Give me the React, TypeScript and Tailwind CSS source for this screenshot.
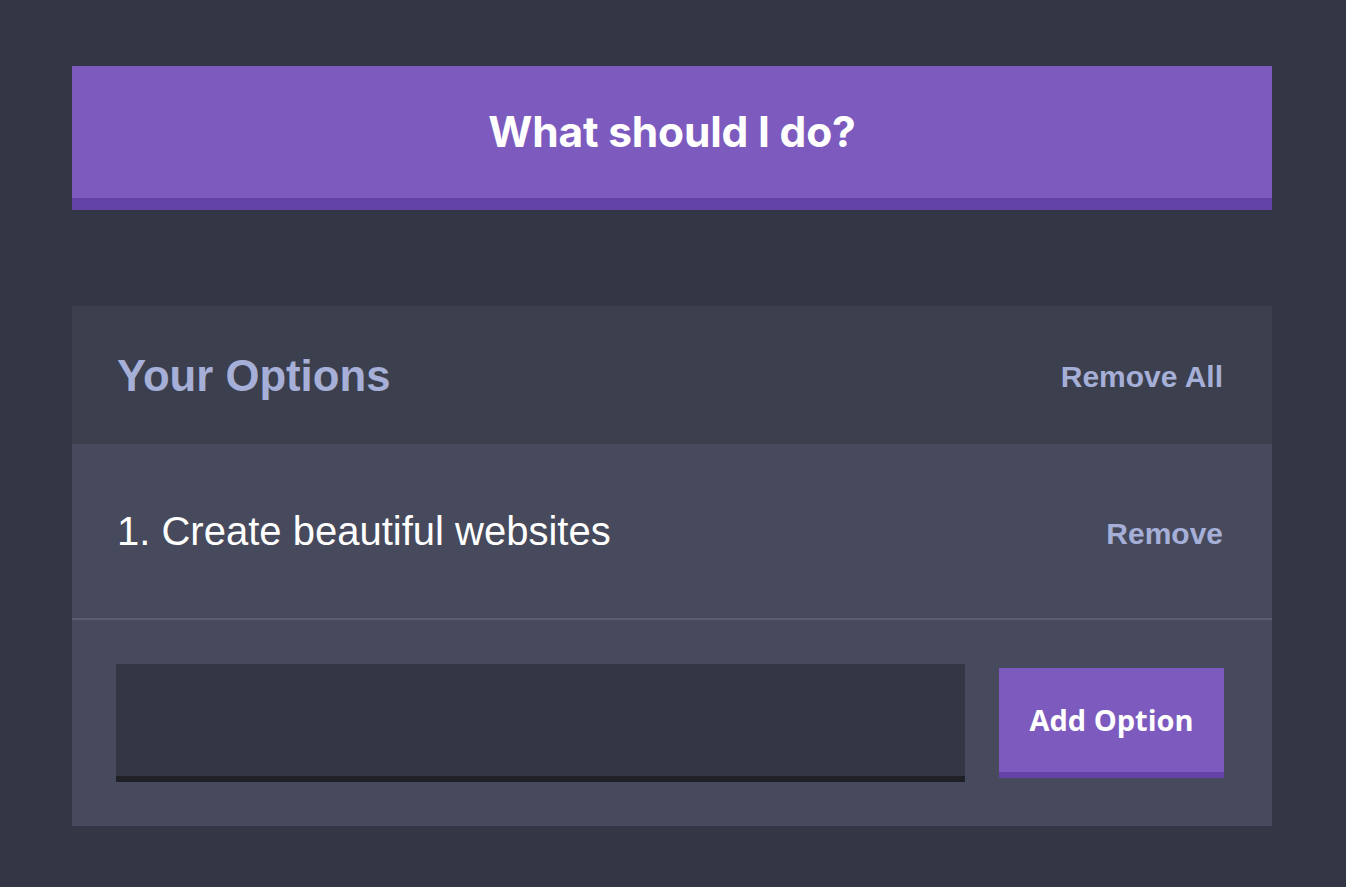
import { useState } from "react";

export default function App() {
  const [options, setOptions] = useState<string[]>(["Create beautiful websites"]);
  const [draft, setDraft] = useState("");

  const addOption = (e: React.FormEvent) => {
    e.preventDefault();
    const value = draft.trim();
    if (!value) return;
    setOptions([...options, value]);
    setDraft("");
  };

  return (
    <div className="min-h-screen bg-[#333745] pt-[66px] pb-[61px]">
      <div className="ml-[72px] w-[1200px]">
        {/* HEADER */}
        <header className="h-[144px] bg-[#7d5bbe] border-b-[12px] border-[#6443a8] flex items-center justify-center">
          <h1 className="font-['Inter',sans-serif] text-[42.5px] font-bold text-white tracking-[-0.2px]">
            What should I do?
          </h1>
        </header>

        {/* WIDGET */}
        <div className="mt-[96px]">
          <div className="h-[138px] bg-[#3c404e] flex items-center justify-between pl-[45px] pr-[49px] pb-[1px]">
            <h3 className="font-['Liberation_Sans',Arial,sans-serif] text-[43.7px] font-bold text-[#a5afd7] mt-[2px]">
              Your Options
            </h3>
            <button
              onClick={() => setOptions([])}
              className="font-['Liberation_Sans',Arial,sans-serif] text-[30px] font-bold text-[#a5afd7] mt-[4px]"
            >
              Remove All
            </button>
          </div>

          {options.map((opt, i) => (
            <div
              key={i}
              className="h-[176px] bg-[#464a5c] border-b-2 border-[#5b5e71] flex items-center justify-between pl-[45px] pr-[49px]"
            >
              <p className="font-['Liberation_Sans',Arial,sans-serif] text-[40px] text-white">
                {i + 1}. {opt}
              </p>
              <button
                onClick={() => setOptions(options.filter((_, j) => j !== i))}
                className="font-['Liberation_Sans',Arial,sans-serif] text-[30px] font-bold text-[#a5afd7] mt-[4px]"
              >
                Remove
              </button>
            </div>
          ))}

          <form
            onSubmit={addOption}
            className="bg-[#464a5c] flex items-center gap-[34px] pl-[44px] py-[44px] pr-[48px]"
          >
            <input
              value={draft}
              onChange={(e) => setDraft(e.target.value)}
              className="w-[849px] h-[118px] bg-[#333745] border-b-[6px] border-[#1f2028] outline-none px-4 text-[29px] text-white font-['Liberation_Sans',Arial,sans-serif]"
            />
            <button className="flex-1 h-[110px] bg-[#7d5bbe] border-b-[6px] border-[#6443a8] text-white font-['Open_Sans',sans-serif] font-bold text-[29px]">
              Add Option
            </button>
          </form>
        </div>
      </div>
    </div>
  );
}
